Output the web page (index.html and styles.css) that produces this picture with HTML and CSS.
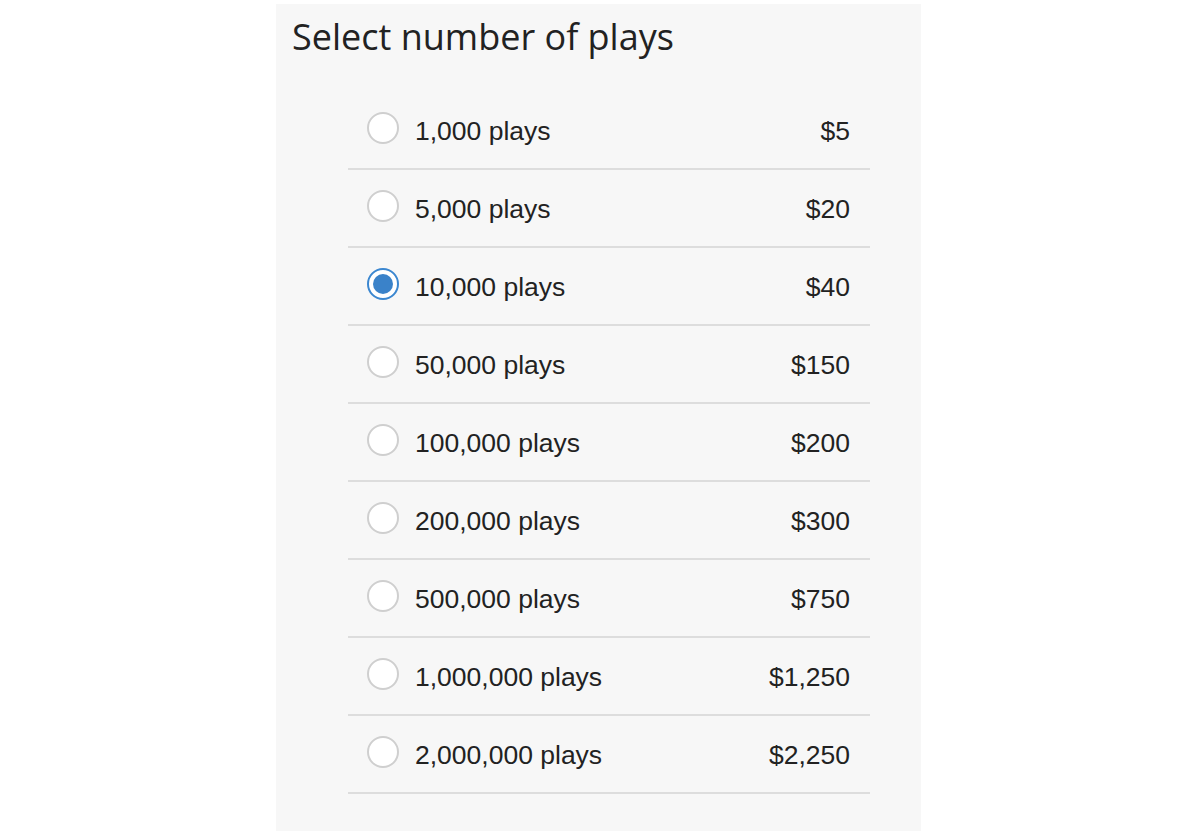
FILE: index.html
```html
<!DOCTYPE html>
<html>
<head>
<meta charset="utf-8">
<link rel="stylesheet" href="styles.css">
</head>
<body>
<div class="panel">
  <h1 class="title">Select number of plays</h1>
  <ul class="options">
    <li class="option"><span class="radio"></span><span class="label">1,000 plays</span><span class="price">$5</span></li>
    <li class="option"><span class="radio"></span><span class="label">5,000 plays</span><span class="price">$20</span></li>
    <li class="option"><span class="radio checked"></span><span class="label">10,000 plays</span><span class="price">$40</span></li>
    <li class="option"><span class="radio"></span><span class="label">50,000 plays</span><span class="price">$150</span></li>
    <li class="option"><span class="radio"></span><span class="label">100,000 plays</span><span class="price">$200</span></li>
    <li class="option"><span class="radio"></span><span class="label">200,000 plays</span><span class="price">$300</span></li>
    <li class="option"><span class="radio"></span><span class="label">500,000 plays</span><span class="price">$750</span></li>
    <li class="option"><span class="radio"></span><span class="label">1,000,000 plays</span><span class="price">$1,250</span></li>
    <li class="option"><span class="radio"></span><span class="label">2,000,000 plays</span><span class="price">$2,250</span></li>
  </ul>
</div>
</body>
</html>
```
FILE: styles.css
```css
html, body {
  margin: 0;
  padding: 0;
  background: #ffffff;
}
.panel {
  margin: 4px 0 0 276px;
  width: 645px;
  height: 827px;
  background: #f7f7f7;
  box-sizing: border-box;
  padding-top: 13px;
}
.title {
  margin: 0 0 0 16px;
  font-family: "Open Sans", sans-serif;
  font-weight: 400;
  font-size: 36px;
  line-height: 40px;
  color: #222;
}
.options {
  list-style: none;
  margin: 35px 0 0 72px;
  padding: 0;
  width: 522px;
}
.option {
  display: flex;
  align-items: center;
  height: 76px;
  border-bottom: 2px solid #dddddd;
  padding: 0 20px 0 19px;
  font-family: "Liberation Sans", Arial, sans-serif;
  font-size: 26.5px;
  color: #222;
}
.option .label,
.option .price {
  margin-top: 2px;
}
.radio {
  width: 32px;
  height: 32px;
  box-sizing: border-box;
  border: 2px solid #cfcfcf;
  border-radius: 50%;
  background: #fff;
  margin-right: 16px;
  margin-top: -4px;
  flex: none;
  position: relative;
}
.radio.checked {
  border-color: #3b87d0;
}
.radio.checked::after {
  content: "";
  position: absolute;
  left: 4px;
  top: 4px;
  width: 20px;
  height: 20px;
  border-radius: 50%;
  background: #3a82c9;
}
.label {
  flex: 1;
}
.price {
  text-align: right;
}
```
